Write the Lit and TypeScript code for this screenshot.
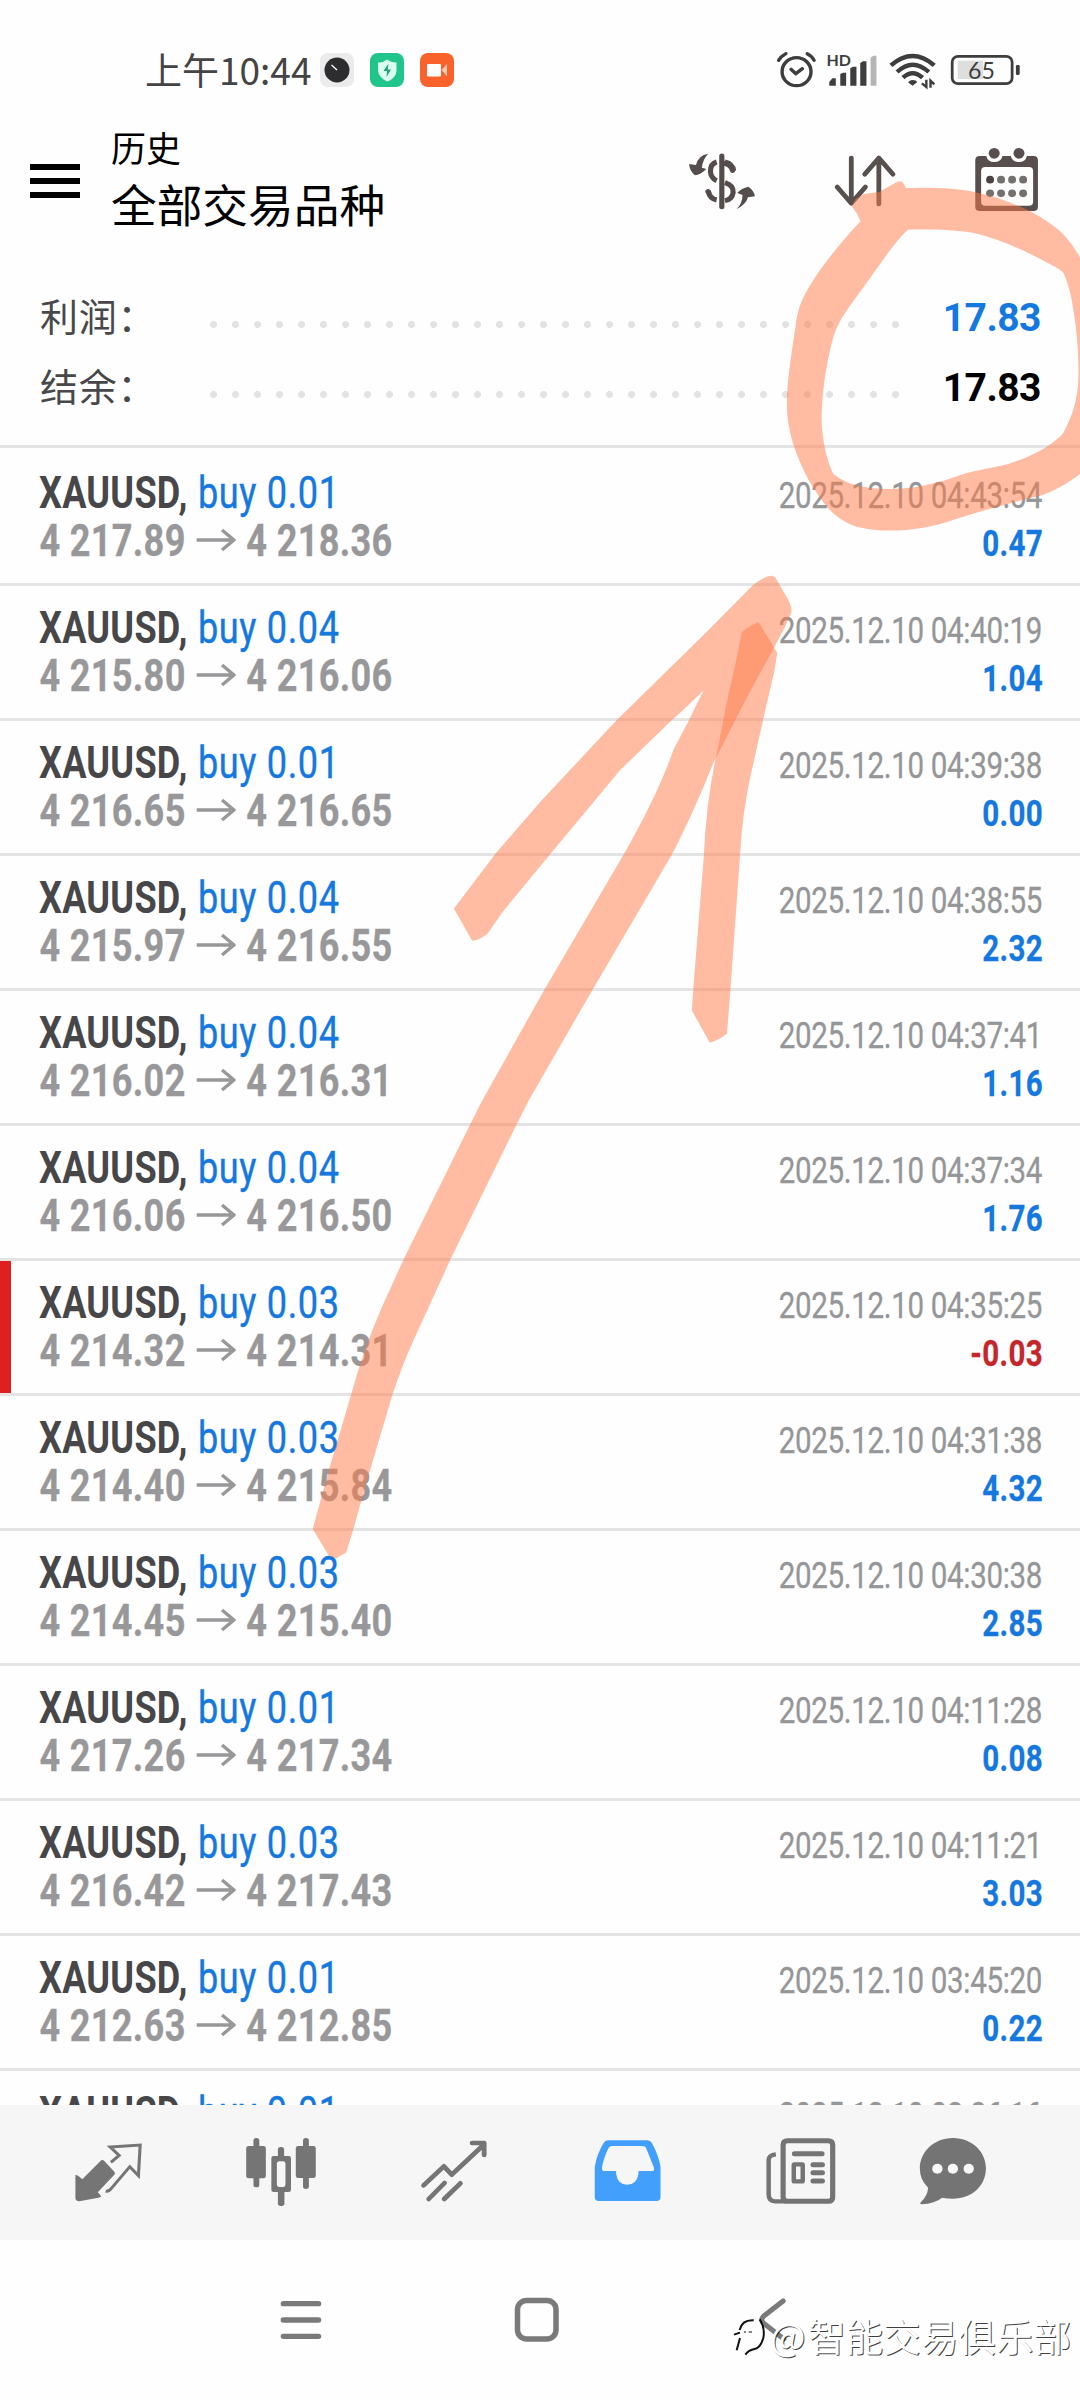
import { LitElement, html, css, svg } from "lit";
import { customElement, property } from "lit/decorators.js";

interface Trade {
  volume: string;
  open: string;
  close: string;
  time: string;
  profit: string;
}

const t = (volume: string, open: string, close: string, time: string, profit: string): Trade => ({
  volume, open, close, time: `2025.12.10 ${time}`, profit,
});

const TRADES: Trade[] = [
  t("0.01", "4 217.89", "4 218.36", "04:43:54", "0.47"),
  t("0.04", "4 215.80", "4 216.06", "04:40:19", "1.04"),
  t("0.01", "4 216.65", "4 216.65", "04:39:38", "0.00"),
  t("0.04", "4 215.97", "4 216.55", "04:38:55", "2.32"),
  t("0.04", "4 216.02", "4 216.31", "04:37:41", "1.16"),
  t("0.04", "4 216.06", "4 216.50", "04:37:34", "1.76"),
  t("0.03", "4 214.32", "4 214.31", "04:35:25", "-0.03"),
  t("0.03", "4 214.40", "4 215.84", "04:31:38", "4.32"),
  t("0.03", "4 214.45", "4 215.40", "04:30:38", "2.85"),
  t("0.01", "4 217.26", "4 217.34", "04:11:28", "0.08"),
  t("0.03", "4 216.42", "4 217.43", "04:11:21", "3.03"),
  t("0.01", "4 212.63", "4 212.85", "03:45:20", "0.22"),
  t("0.01", "4 212.10", "4 212.60", "03:36:16", "0.50"),
];

@customElement("trade-row")
class TradeRow extends LitElement {
  @property({ attribute: false }) trade!: Trade;

  static styles = css`
    :host { display: block; flex: none; }
    .row {
      display: flex; justify-content: space-between; box-sizing: border-box;
      height: 135px; padding: 18px 39px 0 39px;
      border-bottom: 3px solid #e4e4e4;
      font-family: Roboto, "Liberation Sans", sans-serif;
      background: linear-gradient(#e01f1f, #e01f1f) 0 0 / 0 100% no-repeat;
    }
    .loss { background-size: 11px 100%; }
    :host(:first-child) .row { height: 138px; padding-top: 21px; }
    .left { width: 500px; flex: none; }
    .line {
      display: flex; align-items: center; height: 48px; line-height: 48px; font-size: 44px;
      white-space: pre; transform: scaleX(0.82); transform-origin: 0 50%;
    }
    .symbol { font-weight: 700; color: #47474a; letter-spacing: 0.3px; }
    .side { color: #1478de; margin-left: 12.5px; letter-spacing: 0.8px; -webkit-text-stroke: 0.4px #1478de; }
    .price {
      font-weight: 700; color: #98989a; letter-spacing: 0.4px; padding-left: 0.5px;
      -webkit-text-stroke: 0.3px #98989a;
    }
    .arrow { width: 48px; height: 24px; margin: 0 13px 2px 13px; flex: none; }
    .right { padding-top: 3px; text-align: right; }
    .small {
      height: 48px; line-height: 48px; font-size: 36px; white-space: pre;
      transform: scaleX(0.82); transform-origin: 100% 50%;
    }
    .time { color: #949698; letter-spacing: -0.4px; margin-right: -1px; -webkit-text-stroke: 0.3px #949698; }
    .profit { font-weight: 700; color: #1478de; letter-spacing: 0.4px; margin-right: -2px; -webkit-text-stroke: 0.3px; }
    .negative { color: #c4262b; }
  `;

  render() {
    const { volume, open, close, time, profit } = this.trade;
    const loss = profit.startsWith("-");
    return html`
      <div class="row ${loss ? "loss" : ""}">
        <div class="left">
          <div class="line"><span class="symbol">XAUUSD,</span><span class="side">buy ${volume}</span></div>
          <div class="line price">
            <span>${open}</span>
            <svg class="arrow" viewBox="0 0 40 24" preserveAspectRatio="none" fill="none" stroke="#98989a" stroke-width="3.4">
              <path d="M0 12H38M26 2L38 12L26 22" />
            </svg>
            <span>${close}</span>
          </div>
        </div>
        <div class="right">
          <div class="small time">${time}</div>
          <div class="small profit ${loss ? "negative" : ""}">${profit}</div>
        </div>
      </div>
    `;
  }
}

/* Icon paths use a 2.904 x 3 unit grid per pixel. */
const icon = (x: number, y: number, w: number, h: number, body: unknown) => html`
  <svg class="icon" width=${w} height=${h} preserveAspectRatio="none"
    viewBox="${x * 2.904} ${y * 3} ${w * 2.904} ${h * 3}">${body}</svg>
`;

@customElement("app-root")
class AppRoot extends LitElement {
  static styles = css`
    :host { display: block; }
    .screen {
      position: relative; display: flex; flex-direction: column;
      width: 1080px; height: 2400px; overflow: hidden; background: #fefefe;
      font-family: Roboto, "Noto Sans CJK SC", sans-serif;
    }
    .icon { display: block; flex: none; }
    .status { display: flex; align-items: center; height: 100px; padding: 40px 0 0 145px; box-sizing: border-box; }
    .clock {
      width: 175px; flex: none; font: 400 37px/60px "Noto Sans CJK SC", sans-serif; color: #444;
      white-space: nowrap; padding-bottom: 3px;
    }
    .apps { display: flex; gap: 16px; flex: 1; }
    .appbar { display: flex; height: 165px; }
    .menu { display: flex; flex-direction: column; gap: 8px; width: 50px; padding: 64px 31px 0 30px; flex: none; }
    .menu i { height: 6px; background: #000; }
    .heading { flex: 1; color: #000; font-family: "Noto Sans CJK SC", sans-serif; font-weight: 400; }
    .sub { font-size: 35px; line-height: 50px; padding-top: 22px; }
    .title { font-size: 45.7px; line-height: 62px; }
    .actions { display: flex; }
    .summary { display: flex; flex-direction: column; height: 180px; padding: 18px 39px 0 40px; box-sizing: border-box; }
    .sum { display: flex; align-items: center; justify-content: space-between; height: 70px; }
    .label {
      width: 168px; padding-bottom: 6px; white-space: nowrap;
      font: 400 38px/64px "Noto Sans CJK SC", sans-serif; color: #48484a; letter-spacing: 0.8px;
    }
    .dots {
      width: 704px; height: 7px; margin-top: 13px; flex: none;
      background: radial-gradient(circle at 5.5px 3.5px, #e3e3e3 3.2px, transparent 3.8px) 0 0 / 22px 7px;
    }
    .value {
      flex: 1; text-align: right; font-weight: 700; font-size: 39px; line-height: 70px; color: #000;
      letter-spacing: -0.5px;
    }
    .gain { color: #1478de; }
    .list { display: flex; flex-direction: column; height: 1657px; overflow: hidden; border-top: 3px solid #e4e4e4; flex: none; }
    .tabs { display: flex; height: 135px; background: #f6f6f6; flex: none; }
    .system { height: 160px; display: flex; flex: none; }
    .ink { position: absolute; left: 0; top: 0; width: 1080px; height: 2400px; }
    .mark {
      position: absolute; right: 9px; top: 2307px; display: flex; align-items: center;
      font: 400 37.6px/56px "Noto Sans CJK SC", sans-serif; color: #fff; white-space: nowrap;
      text-shadow: 1px 1px 0 rgba(0, 0, 0, 0.75);
    }
    .badge { margin: 4px 4px 0 0; }
    .at { margin-right: 2.5px; }
  `;

  render() {
    return html`
      <div class="screen">
        <div class="status">
          <div class="clock">上午10:44</div>
          <div class="apps">
            <svg class="icon" width="34" height="34"><rect width="34" height="34" rx="8" fill="#ebebeb"/><circle cx="17" cy="17" r="12.5" fill="#2d2d2f"/><path d="M11.5 12L17 17" stroke="#fff" stroke-width="1.4"/></svg>
            <svg class="icon" width="34" height="34"><rect width="34" height="34" rx="8" fill="#20c58c"/><path d="M17 6.5Q22 10 26.500 9.500V18Q26 25 17.500 28.500Q9 25 8 18V9.500Q13 10 17 6.500Z" fill="#dcfff1"/><path d="M18.500 10.500L13.500 18H17L16.500 24L21 16.500H17.800Z" fill="#20a678"/></svg>
            <svg class="icon" width="34" height="34"><rect width="34" height="34" rx="8" fill="#fa622b"/><rect x="7" y="11" width="14" height="12.500" rx="1" fill="#fff"/><path d="M21.500 17L27 11V23.500Z" fill="#ffc5ad"/></svg>
          </div>
          ${icon(230, 10, 310, 60, svg`
            <g fill="none" stroke="#3e3e3e" stroke-width="10" stroke-linecap="round" stroke-linejoin="round">
              <circle cx="745" cy="125" r="42"/><path d="M729 118L743 131L762 116M693 91Q700 79 714 71M776 71Q790 78 796 91"/>
            </g>
            <text x="832" y="108" font-family="Lato, sans-serif" font-weight="700" font-size="47" fill="#3e3e3e" textLength="71" lengthAdjust="spacingAndGlyphs">HD</text>
            <g fill="#3e3e3e">
              <path d="M840 167V156L849 145H859V167ZM872 167V132L880 128H889V167ZM901 167V115L909 110H919V167ZM930 167V99L938 94H948V167Z"/>
              <path d="M960 167V83L968 77H977V167Z" fill="#b5b5b5"/>
              <path d="M1082 167L1070 158Q1072 150 1082 150Q1093 150 1095 157Z"/>
            </g>
            <g fill="none" stroke="#3e3e3e" stroke-width="13">
              <path d="M1019 106Q1082 50 1145 106M1037 126Q1082 82 1129 126M1054 143Q1082 116 1111 143"/>
              <path d="M1122 149V171L1109 160M1134 173V152L1145 163" stroke-width="7"/>
            </g>
            <rect x="1213" y="92" width="74" height="55" fill="#dedede"/>
            <rect x="1197" y="79" width="174" height="82" rx="17" fill="none" stroke="#3e3e3e" stroke-width="8"/>
            <rect x="1382" y="105" width="11" height="30" rx="4" fill="#3e3e3e"/>
            <text x="1243" y="147" font-family="Lato, sans-serif" font-size="72" fill="#3e3e3e" textLength="78" lengthAdjust="spacingAndGlyphs">65</text>
          `)}
        </div>
        <div class="appbar">
          <div class="menu"><i></i><i></i><i></i></div>
          <div class="heading"><div class="sub">历史</div><div class="title">全部交易品种</div></div>
          <div class="actions">
            ${icon(140, 70, 400, 165, svg`
              <g fill="none" stroke="#554c4c" stroke-width="15">
                <path d="M528 378V530" stroke-linecap="round"/>
                <path d="M513 396Q494 402 495 425Q496 444 513 452M537 396Q560 402 562 422M537 458Q562 466 561 487Q558 508 537 512M488 482Q493 506 513 510" />
                <path d="M536 400Q554 404 559 421M488 485L490 488" stroke-linecap="round"/>
              </g>
              <path d="M488 371Q460 375 453 405L433 402Q434 422 450 436Q466 434 483 417L470 413Q472 390 488 371ZM571 537Q598 524 604 502L624 499Q622 482 605 470Q585 474 573 489L588 495Q588 520 571 537Z" fill="#554c4c"/>
              <path d="M904 384V520M863 471L904 520L945 471M984 522V384M943 433L984 384L1025 433" fill="none" stroke="#57504e" stroke-width="14" stroke-linecap="round" stroke-linejoin="round"/>
              <g fill="#574e4d">
                <path fill-rule="evenodd" d="M1277 378H1296Q1300 396 1319 396Q1339 396 1343 378H1367Q1371 396 1391 396Q1410 396 1414 378H1433Q1446 378 1446 391V530Q1446 543 1433 543H1277Q1264 543 1264 530V391Q1264 378 1277 378ZM1293 411Q1281 411 1281 423V515Q1281 527 1293 527H1420Q1432 527 1432 515V423Q1432 411 1420 411Z"/>
                <circle cx="1319" cy="370" r="16"/><circle cx="1391" cy="370" r="16"/>
                ${[1307, 1339, 1371, 1403].map((x) => svg`<circle cx=${x} cy="449" r="11.500" fill=${x === 1307 ? "#4c4242" : "#74706d"}/><circle cx=${x} cy="490" r="11.500" fill="#74706d"/>`)}
              </g>
            `)}
          </div>
        </div>
        <div class="summary">
          <div class="sum"><div class="label">利润：</div><div class="dots"></div><div class="value gain">17.83</div></div>
          <div class="sum"><div class="label">结余：</div><div class="dots"></div><div class="value">17.83</div></div>
        </div>
        <div class="list">
          ${TRADES.map((trade) => html`<trade-row .trade=${trade}></trade-row>`)}
        </div>
        <div class="tabs">
          ${icon(0, 45, 540, 135, svg`
            <g fill="#757575">
              <path d="M294 301Q299 299 303 303L332 335Q336 340 332 344L284 397L294 409Q291 413 286 413L230 424Q220 424 219 415V345Q225 344 239 358Z"/>
              <path d="M322 307L346 286L320 261L407 255L402 347L377 320L321 388Q314 395 307 393" fill="none" stroke="#757575" stroke-width="9"/>
              <rect x="736" y="234" width="17" height="148" rx="8"/><rect x="715" y="258" width="57" height="97" rx="7"/>
              <rect x="880" y="234" width="17" height="153" rx="8"/><rect x="859" y="258" width="58" height="96" rx="7"/>
              <rect x="807" y="261" width="18" height="40" rx="8"/><rect x="807" y="388" width="19" height="50" rx="8"/>
              <path fill-rule="evenodd" d="M795 288H838Q845 288 845 295V389Q845 396 838 396H795Q788 396 788 389V295Q788 288 795 288ZM811 304Q804 304 804 312V372Q804 381 811 381H822Q829 381 829 372V312Q829 304 822 304Z"/>
            </g>
            <path d="M1230 376L1289 319L1312 344L1404 255M1371 249H1406V285M1245 417L1291 369M1290 417L1337 370" fill="none" stroke="#757575" stroke-width="14" stroke-linecap="round" stroke-linejoin="round"/>
          `)}
          ${icon(0, 45, 540, 135, svg`
            <path fill-rule="evenodd" fill="#439ffc" d="M198 241H312Q320 241 325 249Q344 285 350 320V411Q350 423 338 423H171Q159 423 159 411V320Q166 280 186 247Q190 241 198 241ZM210 258Q202 258 199 264Q184 295 180 323Q179 333 187 333H221V341Q226 374 253 374Q281 374 286 341V333H325Q333 333 331 323L308 264Q305 258 297 258Z"/>
            <g fill="none" stroke="#747474" stroke-width="15" stroke-linecap="round">
              <path d="M719 242H837Q850 242 850 255V411Q850 424 837 424H719Q706 424 706 411V255Q706 242 719 242Z"/>
              <path d="M685 283Q664 285 664 300V403Q664 424 682 424H715" stroke-linecap="butt" stroke-width="13"/>
              <path d="M739 281H819M793 314H820M793 338H820M793 363H820"/>
              <rect x="737" y="313" width="26" height="51" rx="2" stroke-width="13"/>
            </g>
            <path d="M1199 234C1257 234 1295 278 1295 325C1295 375 1257 416 1199 416Q1182 416 1168 413Q1147 430 1108 433Q1101 431 1107 425Q1126 406 1127 383Q1103 360 1103 325C1103 278 1142 234 1199 234Z" fill="#747474"/>
            <g fill="#f8f8f8"><circle cx="1154" cy="326" r="15"/><circle cx="1199" cy="326" r="15"/><circle cx="1245" cy="326" r="15"/></g>
          `)}
        </div>
        <div class="system">
          ${icon(0, 180, 540, 160, svg`<path d="M823 731H925M823 780H925M823 829H925" stroke="#7a7a7a" stroke-width="16" stroke-linecap="round"/>`)}
          ${icon(0, 180, 540, 160, svg`<path d="M706 723L650 768Q638 779 650 790L708 837" fill="none" stroke="#7a7a7a" stroke-width="15" stroke-linecap="round" stroke-linejoin="round"/>`)}
        </div>
        <svg class="ink" viewBox="0 0 1080 2400">
          <rect x="517.500" y="2300.500" width="38.500" height="38.500" rx="9" fill="none" stroke="#7a7a7a" stroke-width="5.500"/>
          <g fill="#ff7945" fill-opacity="0.500">
            <path transform="translate(540 170) scale(0.34435 0.33333)" fill-rule="evenodd" d="M905 108L916 88L940 72L985 66L1030 40Q1048 28 1055 40L1064 55C1120 52 1200 52 1270 68C1350 85 1440 125 1500 175C1530 200 1550 230 1568 262L1580 280V905L1568 912C1530 942 1490 965 1450 978C1350 1002 1270 1027 1200 1050C1100 1085 1000 1090 920 1070C850 1048 815 990 780 930C740 850 715 780 717 690C719 620 735 520 742 470C750 400 770 370 800 320C840 260 880 210 931 154L920 130ZM1068 179L1050 198C1010 245 980 295 930 365C890 420 860 460 847 520C830 590 820 660 818 730C816 790 830 870 852 912C890 945 950 958 1020 957C1080 957 1150 943 1230 912C1270 900 1310 895 1360 882C1440 855 1495 820 1520 788C1545 740 1558 700 1563 640C1566 560 1560 490 1549 420C1543 370 1530 330 1520 308Q1510 297 1490 287C1430 255 1350 210 1260 189C1200 178 1130 178 1068 179Z"/>
            <g transform="translate(300 560) scale(0.34435)">
              <path d="M447 1012L570 850L700 700L920 465L1180 210L1315 73Q1350 45 1372 46L1380 50L1412 105Q1430 135 1427 152L1410 190L1380 248L1300 395L1200 590Q1140 740 1080 855L850 1247L665 1568L629 1639L437 2031L329 2267Q300 2330 269 2422L189 2692L155 2814L134 2882L104 2900L84 2892L37 2814L87 2632L149 2422Q185 2290 239 2167L301 2031L494 1639L530 1568L710 1247L940 855Q1040 680 1085 550L1130 465L1172 378Q1120 430 1080 465L930 610L730 850L590 1020L545 1085Q520 1105 500 1106Z"/>
              <path d="M1283 210Q1305 190 1332 181L1362 230L1386 270L1378 320L1345 463L1310 620Q1285 730 1278 855L1250 1247L1240 1375Q1215 1395 1190 1402L1138 1308L1142 1247L1173 855Q1180 690 1215 540L1240 410L1265 300Z"/>
            </g>
          </g>
        </svg>
        <div class="mark">
          <svg class="badge" width="34" height="42" viewBox="36 130 102 126" fill="none" stroke="#111">
            <path d="M42 186L60 180M59 172Q66 141 101 143M50 233L60 196M119 140Q136 165 130 196Q121 226 104 229Q86 232 76 246" stroke-width="6"/>
            <path d="M72 178H78M86 178H96" stroke-width="3"/>
          </svg>
          <span class="at">@</span><span>智能交易俱乐部</span>
        </div>
      </div>
    `;
  }
}
